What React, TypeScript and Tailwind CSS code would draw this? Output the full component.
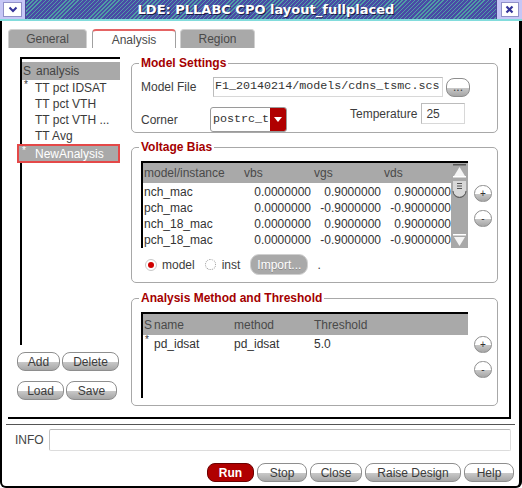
import React from 'react'

const btnBg =
  'bg-[linear-gradient(to_bottom,#ffffff_0%,#ffffff_52%,#c8c8c8_54%,#a6a6a6_100%)]'

function Pill({ label, className = '' }: { label: string; className?: string }) {
  return (
    <button
      className={`flex h-[19px] items-center justify-center rounded-[8px] border border-[#8e8e8e] ${btnBg} text-[12px] leading-none text-[#3c3c3c] ${className}`}
    >
      {label}
    </button>
  )
}

function RoundBtn({ sign }: { sign: string }) {
  return (
    <button
      className={`flex h-[17px] w-[18px] items-center justify-center rounded-full border border-[#8e8e8e] ${btnBg} text-[10px] leading-none text-[#333]`}
    >
      {sign}
    </button>
  )
}

function Legend({ text }: { text: string }) {
  return (
    <legend className="ml-[7px] px-[2px] text-[12px] font-bold leading-[14px] text-[#a40000]">
      {text}
    </legend>
  )
}

const biasRows = [
  ['nch_mac', '0.0000000', '0.9000000', '0.9000000'],
  ['pch_mac', '0.0000000', '-0.9000000', '-0.9000000'],
  ['nch_18_mac', '0.0000000', '0.9000000', '0.9000000'],
  ['pch_18_mac', '0.0000000', '-0.9000000', '-0.9000000'],
]

const analyses = [
  { star: true, name: 'TT pct IDSAT' },
  { star: false, name: 'TT pct VTH' },
  { star: false, name: 'TT pct VTH ...' },
  { star: false, name: 'TT Avg' },
]

function Scrollbar() {
  return (
    <div className="w-[17px] shrink-0 bg-[#a8a8a8]">
      <svg width="17" height="85" viewBox="0 0 17 85">
        <rect x="2" y="1" width="13" height="1.5" fill="#555" />
        <polygon points="3,13 8.5,4 14,13" fill="#f4f4f4" />
        <rect x="2" y="13" width="13" height="1.5" fill="#ffffff" />
        <path d="M2 18 H15 V27 A6.5 6.5 0 0 1 2 27 Z" fill="#d8d8d8" />
        <path d="M2 28 A6.5 6.5 0 0 0 15 28" fill="none" stroke="#555" strokeWidth="1" />
        <rect x="6" y="20" width="5" height="1" fill="#555" />
        <rect x="6" y="22.5" width="5" height="1" fill="#555" />
        <rect x="6" y="25" width="5" height="1" fill="#555" />
        <rect x="2" y="71" width="13" height="1.5" fill="#ffffff" />
        <polygon points="3,74 8.5,83 14,74" fill="#f4f4f4" />
      </svg>
    </div>
  )
}

export default function App() {
  return (
    <div className="flex h-[488px] w-[522px] flex-col overflow-hidden bg-white font-['Liberation_Sans',Arial,sans-serif] text-[12px] text-[#3c3c3c]">
      {/* title bar */}
      <div className="flex h-[21px] shrink-0 border-b-2 border-[#82dcdc]">
        <div className="flex w-[26px] items-center justify-center border-r border-[#4a4a96] bg-[#c6c6f6]">
          <div className="flex h-[15px] w-[19px] items-center justify-center border border-[#9090c8] bg-white">
            <svg width="10" height="7" viewBox="0 0 10 7">
              <path d="M1.5 1.5 L5 5 L8.5 1.5" fill="none" stroke="#34349a" strokeWidth="2" />
            </svg>
          </div>
        </div>
        <div className="flex flex-1 items-center justify-center bg-[repeating-linear-gradient(135deg,#4a4aa6_0px,#4a4aa6_1.9px,#4e9ea4_1.9px,#4e9ea4_2.9px)] pl-[10px]">
          <span className="font-['DejaVu_Sans',sans-serif] text-[13px] font-bold leading-none text-white [text-shadow:1px_1px_0_#1c1c48]">
            LDE: PLLABC CPO layout_fullplaced
          </span>
        </div>
        <div className="flex w-[26px] items-center justify-center border-l border-[#4a4a96] bg-[#c6c6f6]">
          <div className="flex h-[15px] w-[18px] items-center justify-center border border-[#9090c8] bg-white">
            <svg width="9" height="9" viewBox="0 0 9 9">
              <path d="M1.5 1.5 L7.5 7.5 M7.5 1.5 L1.5 7.5" stroke="#34349a" strokeWidth="2.2" />
            </svg>
          </div>
        </div>
      </div>

      {/* body */}
      <div className="flex flex-1 flex-col rounded-b-[6px] border-b-2 border-l-2 border-r-[3px] border-black">
        {/* tabs */}
        <div className="flex h-[27px] shrink-0 items-end pl-[6px]">
          <div className="flex h-[19px] w-[79px] items-center justify-center rounded-t-[4px] border-x border-t border-[#d0d0d0] bg-[#a9a9a9] text-[#4a4a4a]">
            General
          </div>
          <div className="ml-[5px] flex h-[19px] w-[84px] items-center justify-center rounded-t-[4px] border-x border-t-2 border-x-[#a0a0a0] border-t-[#e46464] bg-white text-[#4a4a4a]">
            Analysis
          </div>
          <div className="ml-[4px] flex h-[19px] w-[75px] items-center justify-center rounded-t-[4px] border-x border-t border-[#d0d0d0] bg-[#a9a9a9] text-[#4a4a4a]">
            Region
          </div>
        </div>

        {/* panel */}
        <div className="ml-[6px] mr-[8px] flex h-[371px] shrink-0 border-b-2 border-r-2 border-black">
          {/* left column */}
          <div className="ml-[9px] w-[103px] shrink-0 pt-[9px]">
            <div className="ml-[3px] h-[288px] w-[100px] border-l-2 border-t-2 border-black pt-[3px]">
              <div className="flex h-[18px] items-center bg-[#a9a9a9] pl-[1px] text-[#444]">
                <span className="w-[13px]">S</span>
                <span>analysis</span>
              </div>
              {analyses.map((a) => (
                <div key={a.name} className="flex h-[16px] items-center text-[#3a3a3a]">
                  <span className="w-[13px] self-start pl-[2px] text-[10px] leading-[10px]">{a.star ? '*' : ''}</span>
                  <span>{a.name}</span>
                </div>
              ))}
              <div className="-ml-[5px] flex h-[19px] w-[103px] border-2 border-[#e44848]">
                <div className="flex flex-1 items-center bg-[#a9a9a9] text-white">
                  <span className="w-[16px] self-start pl-[3px] text-[10px] leading-[10px]">*</span>
                  <span>NewAnalysis</span>
                </div>
              </div>
            </div>
            <div className="mt-[7px] flex gap-[2px]">
              <Pill label="Add" className="w-[43px]" />
              <Pill label="Delete" className="w-[57px]" />
            </div>
            <div className="mt-[10px] flex gap-[2px]">
              <Pill label="Load" className="w-[47px]" />
              <Pill label="Save" className="w-[51px]" />
            </div>
          </div>

          {/* right column */}
          <div className="ml-[11px] w-[367px] shrink-0 pt-[8px]">
            {/* Model Settings */}
            <fieldset className="rounded-[5px] border border-[#a8a8a8]">
              <Legend text="Model Settings" />
              <div className="pl-[9px]">
                <div className="mt-[7px] flex items-center">
                  <span className="w-[72px]">Model File</span>
                  <div className="flex h-[20px] w-[230px] items-center overflow-hidden border border-[#d8d8d8] border-l-[#bcbcbc] border-t-[#bcbcbc] pl-[1px] font-['Liberation_Mono',monospace] text-[11.7px] whitespace-nowrap text-[#333]">
                    F1_20140214/models/cdns_tsmc.scs
                  </div>
                  <Pill label="..." className="ml-[3px] w-[24px] items-end pb-[3px] text-[10px]" />
                </div>
                <div className="mt-[6px] flex items-start">
                  <span className="mt-[4px] flex h-[25px] w-[69px] items-center">Corner</span>
                  <div className="mt-[4px] flex h-[25px] w-[77px] overflow-hidden rounded-[3px] border border-[#9a9a9a]">
                    <div className="flex flex-1 items-center pl-[2px] font-['Liberation_Mono',monospace] text-[11.7px] whitespace-nowrap text-[#333]">
                      postrc_t
                    </div>
                    <div className="flex w-[16px] items-center justify-center bg-[#b00000]">
                      <svg width="8" height="5" viewBox="0 0 8 5">
                        <polygon points="0,0 8,0 4,5" fill="#ffffff" />
                      </svg>
                    </div>
                  </div>
                  <span className="ml-[63px] flex h-[21px] items-center">Temperature</span>
                  <div className="ml-[4px] flex h-[21px] w-[44px] items-center border border-[#d8d8d8] border-l-[#bcbcbc] border-t-[#bcbcbc] pl-[4px]">
                    25
                  </div>
                </div>
              </div>
            </fieldset>

            {/* Voltage Bias */}
            <fieldset className="mt-[7px] rounded-[5px] border border-[#a8a8a8]">
              <Legend text="Voltage Bias" />
              <div className="pb-[7px] pl-[9px]">
                <div className="mt-[7px] flex items-start">
                  <div className="flex h-[87px] w-[327px] border-l-2 border-t-2 border-black">
                    <div className="flex-1">
                      <div className="grid h-[20px] grid-cols-[98px_70px_70px_70px] items-center bg-[#a9a9a9] text-[#4a4a4a]">
                        <span className="pl-[1px]">model/instance</span>
                        <span className="pl-[3px]">vbs</span>
                        <span className="pl-[3px]">vgs</span>
                        <span className="pl-[3px]">vds</span>
                      </div>
                      {biasRows.map((r) => (
                        <div key={r[0]} className="grid h-[16px] grid-cols-[98px_70px_70px_70px] items-center text-[#333]">
                          <span className="pl-[1px]">{r[0]}</span>
                          <span className="text-right">{r[1]}</span>
                          <span className="text-right">{r[2]}</span>
                          <span className="text-right">{r[3]}</span>
                        </div>
                      ))}
                    </div>
                    <Scrollbar />
                  </div>
                  <div className="ml-[6px] flex flex-col gap-[8px] pt-[24px]">
                    <RoundBtn sign="+" />
                    <RoundBtn sign="-" />
                  </div>
                </div>
                <div className="mt-[6px] flex h-[21px] items-center">
                  <span className="ml-[4px] flex h-[12px] w-[12px] items-center justify-center rounded-full border border-[#c8c8c8] bg-white">
                    <span className="h-[6px] w-[6px] rounded-full bg-[#d00000]" />
                  </span>
                  <span className="ml-[5px]">model</span>
                  <span className="ml-[10px] h-[11px] w-[11px] rounded-full border border-dotted border-[#9a9a9a] bg-white" />
                  <span className="ml-[6px]">inst</span>
                  <button className="ml-[10px] flex h-[21px] w-[58px] items-center justify-center rounded-[9px] border border-[#d0d0d0] bg-[#a9a9a9] text-[12px] leading-none text-white [text-shadow:0_1px_0_#8a8a8a]">
                    Import...
                  </button>
                  <span className="ml-[9px]">.</span>
                </div>
              </div>
            </fieldset>

            {/* Analysis Method and Threshold */}
            <fieldset className="mt-[8px] rounded-[5px] border border-[#a8a8a8]">
              <Legend text="Analysis Method and Threshold" />
              <div className="pb-[7px] pl-[9px]">
                <div className="mt-[7px] flex items-start">
                  <div className="h-[86px] w-[327px] border-l-2 border-t-2 border-black">
                    <div className="grid h-[21px] grid-cols-[11px_80px_80px_1fr] items-center bg-[#a9a9a9] text-[#4a4a4a]">
                      <span className="pl-[1px]">S</span>
                      <span>name</span>
                      <span>method</span>
                      <span>Threshold</span>
                    </div>
                    <div className="grid h-[16px] grid-cols-[11px_80px_80px_1fr] items-center text-[#333]">
                      <span className="self-start pl-[2px] text-[10px] leading-[10px]">*</span>
                      <span>pd_idsat</span>
                      <span>pd_idsat</span>
                      <span>5.0</span>
                    </div>
                  </div>
                  <div className="ml-[6px] flex flex-col gap-[8px] pt-[24px]">
                    <RoundBtn sign="+" />
                    <RoundBtn sign="-" />
                  </div>
                </div>
              </div>
            </fieldset>
          </div>
        </div>

        {/* separator */}
        <div className="mx-[4px] mt-[5px] h-px shrink-0 bg-[#555]" />

        {/* info */}
        <div className="mt-[4px] flex h-[22px] shrink-0 items-center pl-[13px]">
          <span className="w-[34px] text-[#444]">INFO</span>
          <div className="mr-[8px] h-[22px] flex-1 rounded-[2px] border border-[#dcdcdc] border-l-[#c4c4c4] border-t-[#b8b8b8]" />
        </div>

        {/* action buttons */}
        <div className="mt-[12px] flex shrink-0 justify-end gap-[3px] pr-[5px]">
          <button className="flex h-[19px] w-[47px] items-center justify-center rounded-[8px] border border-[#6a0000] bg-[#b00000] text-[12px] font-bold leading-none text-white">
            Run
          </button>
          <Pill label="Stop" className="w-[50px]" />
          <Pill label="Close" className="w-[52px]" />
          <Pill label="Raise Design" className="w-[96px]" />
          <Pill label="Help" className="w-[50px]" />
        </div>
      </div>
    </div>
  )
}
